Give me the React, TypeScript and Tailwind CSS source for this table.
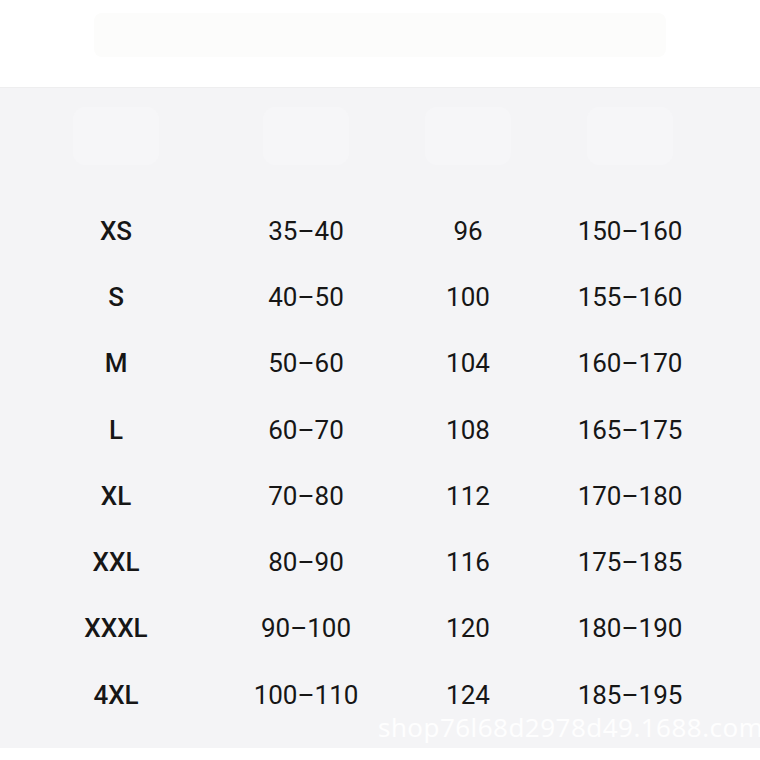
import React from "react";

const rows: [string, string, string, string][] = [
  ["XS", "35–40", "96", "150–160"],
  ["S", "40–50", "100", "155–160"],
  ["M", "50–60", "104", "160–170"],
  ["L", "60–70", "108", "165–175"],
  ["XL", "70–80", "112", "170–180"],
  ["XXL", "80–90", "116", "175–185"],
  ["XXXL", "90–100", "120", "180–190"],
  ["4XL", "100–110", "124", "185–195"],
];

export default function App() {
  return (
    <div
      className="w-[760px] h-[760px] bg-white overflow-hidden"
      style={{ fontFamily: "Roboto, 'Liberation Sans', sans-serif" }}
    >
      <div className="h-[87px] flex items-start justify-center pt-[13px]">
        <div className="w-[572px] h-[44px] rounded-lg bg-[#fcfcfb]" />
      </div>
      <div className="relative h-[661px] bg-[#f4f4f6] border-t border-[#eeeeef] overflow-hidden">
        <div className="grid grid-cols-[232px_148px_176px_148px] pt-[19px]">
          {[0, 1, 2, 3].map((i) => (
            <div key={i} className="flex justify-center">
              <div className="w-[86px] h-[58px] rounded-xl bg-[#f6f6f8]" />
            </div>
          ))}
        </div>
        <div className="grid grid-cols-[232px_148px_176px_148px] mt-[33px] text-[#161616] text-[26px]">
          {rows.map((r) => (
            <React.Fragment key={r[0]}>
              <div className="h-[66.3px] flex items-center justify-center font-medium">{r[0]}</div>
              <div className="h-[66.3px] flex items-center justify-center">{r[1]}</div>
              <div className="h-[66.3px] flex items-center justify-center">{r[2]}</div>
              <div className="h-[66.3px] flex items-center justify-center">{r[3]}</div>
            </React.Fragment>
          ))}
        </div>
        <div
          className="absolute left-[378px] top-[626px] whitespace-nowrap text-[26px] tracking-[0.5px] text-white/90 leading-none"
          style={{ fontFamily: "'Open Sans', sans-serif" }}
        >
          shop76l68d2978d49.1688.com
        </div>
      </div>
    </div>
  );
}
